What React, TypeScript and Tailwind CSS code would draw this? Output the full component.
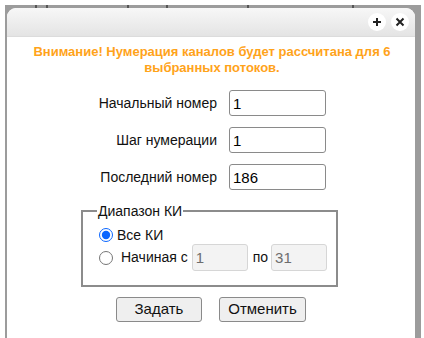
import React from "react";

export default function App() {
  const font = { fontFamily: '"Liberation Sans", Arial, sans-serif' };
  return (
    <div className="w-[424px] h-[338px] bg-white overflow-hidden pl-[5px] pt-[5px]" style={font}>
      <div className="relative w-[416px] h-[333px] bg-[#9c9c9c] pl-[2px] pt-[3px] pr-[6px]">
        <div className="absolute top-0 left-[30px] w-[2px] h-[3px] bg-[#555]" />
        <div className="absolute top-0 left-[41px] w-[2px] h-[3px] bg-[#555]" />
        <div className="absolute top-0 left-[122px] w-[2px] h-[3px] bg-[#555]" />
        <div className="absolute top-0 left-[161px] w-[2px] h-[3px] bg-[#555]" />
        <div className="absolute top-0 left-[242px] w-[2px] h-[3px] bg-[#555]" />
        <div className="absolute top-0 left-[347px] w-[2px] h-[3px] bg-[#555]" />
        <div className="w-[408px] h-[330px] bg-white rounded-t-[9px] overflow-hidden">
          <div className="h-[29px] bg-gradient-to-b from-[#f7f7f7] to-[#e4e4e4] border-b border-[#dcdcdc] flex items-center justify-end gap-[5px] pr-[6px]">
            <div className="w-[18px] h-[18px] rounded-full bg-white flex items-center justify-center">
              <svg width="10" height="10" viewBox="0 0 10 10">
                <path d="M5 1V9M1 5H9" stroke="#222" strokeWidth="2" />
              </svg>
            </div>
            <div className="w-[18px] h-[18px] rounded-full bg-white flex items-center justify-center">
              <svg width="10" height="10" viewBox="0 0 10 10">
                <path d="M1.5 1.5L8.5 8.5M8.5 1.5L1.5 8.5" stroke="#222" strokeWidth="2" />
              </svg>
            </div>
          </div>
          <div className="pt-[7px] pl-[2px] text-center text-[13px] leading-[16px] font-bold text-[#ffa31a]">
            Внимание! Нумерация каналов будет рассчитана для 6
            <br />
            выбранных потоков.
          </div>
          <div className="pt-[14px] pl-[82px] flex flex-col gap-[11px] text-[14px] text-[#111]">
            {[
              ["Начальный номер", "1"],
              ["Шаг нумерации", "1"],
              ["Последний номер", "186"],
            ].map(([l, v]) => (
              <div key={l} className="flex items-center gap-[12px]">
                <div className="w-[128px] text-right">{l}</div>
                <input
                  readOnly
                  value={v}
                  className="w-[97px] h-[26px] border border-[#8a8a8a] rounded-[3px] px-[3px] text-[15px] text-black outline-none"
                  style={font}
                />
              </div>
            ))}
          </div>
          <fieldset className="ml-[74px] mt-[13px] w-[257px] h-[84px] border-2 border-[#8c8c8c] pl-[16px] pr-0 pt-0 text-[14px] text-[#111] whitespace-nowrap">
            <legend className="px-[1px] ml-[-2px] leading-[16px]">Диапазон КИ</legend>
            <label className="flex items-center h-[18px] mt-[7px]">
              <input type="radio" name="r" defaultChecked className="shrink-0 w-[14px] h-[14px] m-0 accent-[#0a66ff]" />
              <span className="ml-[4px]">Все КИ</span>
            </label>
            <label className="flex items-center h-[27px]">
              <input type="radio" name="r" className="shrink-0 w-[14px] h-[14px] m-0" />
              <span className="ml-[8px] shrink-0">Начиная с</span>
              <input
                disabled
                value="1"
                readOnly
                className="shrink-0 ml-[4px] w-[56px] h-[27px] border border-[#d6d6d6] bg-[#f3f3f3] rounded-[3px] px-[3px] text-[15px] text-[#6d6d6d]"
                style={font}
              />
              <span className="ml-[5px] shrink-0">по</span>
              <input
                disabled
                value="31"
                readOnly
                className="shrink-0 ml-[3px] w-[56px] h-[27px] border border-[#d6d6d6] bg-[#f3f3f3] rounded-[3px] px-[3px] text-[15px] text-[#6d6d6d]"
                style={font}
              />
            </label>
          </fieldset>
          <div className="mt-[10px] flex justify-center gap-[17px] text-[15px] text-[#111]">
            <button className="w-[86px] h-[25px] bg-[#efefef] border border-[#8a8a8a] rounded-[3px]">Задать</button>
            <button className="w-[87px] h-[25px] bg-[#efefef] border border-[#8a8a8a] rounded-[3px]">Отменить</button>
          </div>
        </div>
      </div>
    </div>
  );
}
